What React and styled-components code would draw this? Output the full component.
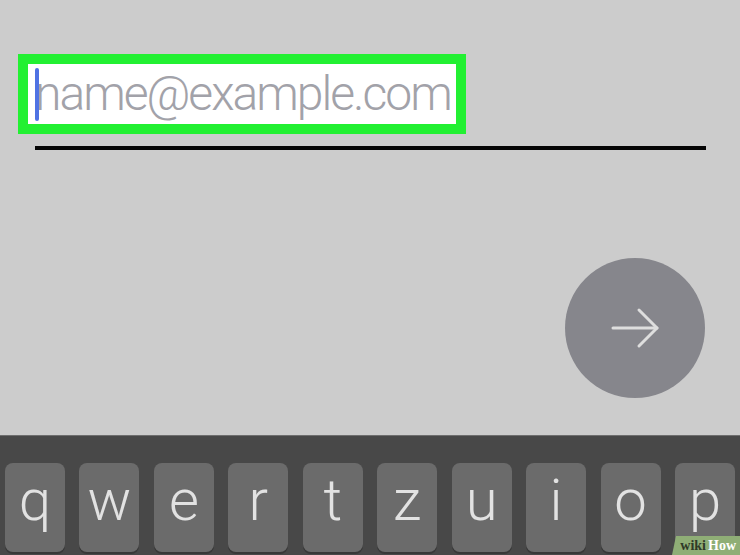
import styled, { createGlobalStyle } from "styled-components";

const Global = createGlobalStyle`
  html, body {
    margin: 0;
    padding: 0;
    background: #cccccc;
    overflow: hidden;
  }
`;

const Screen = styled.div`
  position: relative;
  width: 740px;
  height: 555px;
  display: flex;
  flex-direction: column;
  background: #cccccc;
  overflow: hidden;
  font-family: Roboto, "Liberation Sans", sans-serif;
`;

const Form = styled.div`
  height: 435px;
  box-sizing: border-box;
  padding-top: 54px;
  display: flex;
  flex-direction: column;
`;

const Highlight = styled.div`
  position: relative;
  margin-left: 18px;
  width: 448px;
  height: 80px;
  box-sizing: border-box;
  border: 10px solid #22f032;
  background: #ffffff;
  display: flex;
  align-items: center;
  padding-left: 7px;
`;

const Placeholder = styled.span`
  font-size: 48px;
  font-weight: 300;
  letter-spacing: -2px;
  color: #a2a2a9;
  line-height: 1;
  margin-top: -1px;
`;

const Caret = styled.span`
  position: absolute;
  left: 7px;
  top: 4px;
  width: 4px;
  height: 53px;
  border-radius: 2px;
  background: #4f72e3;
`;

const Underline = styled.div`
  margin: 12px 0 0 35px;
  width: 671px;
  height: 4px;
  background: #050505;
`;

const ButtonRow = styled.div`
  display: flex;
  justify-content: flex-end;
  padding-right: 35px;
  margin-top: 108px;
`;

const NextButton = styled.div`
  width: 140px;
  height: 140px;
  border-radius: 50%;
  background: #86868c;
  display: flex;
  align-items: center;
  justify-content: center;
`;

const Keyboard = styled.div`
  flex: 1;
  background: #484848;
  border-top: 1px solid #6e6e6e;
  box-sizing: border-box;
  padding: 27px 5px 0;
  display: flex;
  gap: 14.4px;
`;

const Key = styled.div`
  flex: 1;
  height: 89px;
  border-radius: 8px;
  background: #6b6b6b;
  box-shadow: 0 2px 0 #383838;
  display: flex;
  justify-content: center;
  padding-top: 8px;
  box-sizing: border-box;
  font-family: Roboto, "Liberation Sans", sans-serif;
  font-weight: 300;
  font-size: 58px;
  line-height: 58px;
  color: #e2e2e2;
`;

const Badge = styled.div`
  position: absolute;
  right: 0;
  bottom: 0;
  width: 68px;
  height: 19px;
  background: #8fae76;
  clip-path: polygon(4px 0, 100% 0, 100% 100%, 0 100%);
  display: flex;
  align-items: center;
  justify-content: flex-end;
  padding-right: 4px;
  box-sizing: border-box;
  font-family: "Liberation Serif", serif;
  font-weight: bold;
  font-size: 14px;
`;

const Wiki = styled.span`
  color: #2f3a28;
`;

const How = styled.span`
  color: #ffffff;
  margin-left: 2px;
`;

const keys = ["q", "w", "e", "r", "t", "z", "u", "i", "o", "p"];

export default function App() {
  return (
    <Screen>
      <Global />
      <Form>
        <Highlight>
          <Caret />
          <Placeholder>name@example.com</Placeholder>
        </Highlight>
        <Underline />
        <ButtonRow>
          <NextButton>
            <svg width="50" height="42" viewBox="0 0 50 42">
              <g
                fill="none"
                stroke="#dedede"
                strokeWidth="3"
                strokeLinecap="round"
                strokeLinejoin="round"
              >
                <line x1="3" y1="21" x2="47" y2="21" />
                <polyline points="29,3 47,21 29,39" />
              </g>
            </svg>
          </NextButton>
        </ButtonRow>
      </Form>
      <Keyboard>
        {keys.map((k) => (
          <Key key={k}>{k}</Key>
        ))}
      </Keyboard>
      <Badge>
        <Wiki>wiki</Wiki>
        <How>How</How>
      </Badge>
    </Screen>
  );
}
